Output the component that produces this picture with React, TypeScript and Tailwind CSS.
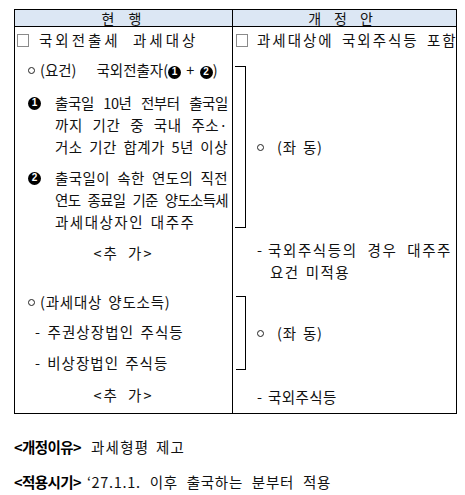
import React from "react";

function Num({ n }: { n: string }) {
  return (
    <span className="inline-flex h-[13px] w-[13px] shrink-0 items-center justify-center rounded-full bg-black align-middle font-['Liberation_Sans',sans-serif] text-[10px] font-bold leading-none tracking-normal text-white">
      {n}
    </span>
  );
}

function Box() {
  return <span className="h-[13px] w-[12px] shrink-0 border border-[#8a8a8a]" />;
}

function Dot() {
  return <span className="h-[7px] w-[7px] shrink-0 rounded-full border border-[#222]" />;
}

// justified line inside a numbered paragraph
function JLine({ children, cls = "" }: { children: React.ReactNode; cls?: string }) {
  return (
    <div className={"h-[22px] w-[173px] whitespace-nowrap text-justify leading-[22px] [text-align-last:justify] " + cls}>
      {children}
    </div>
  );
}

export default function App() {
  return (
    <div className="h-[495px] w-[465px] bg-white pl-[14px] pt-[9px] font-['Noto_Sans_CJK_KR','Noto_Sans',sans-serif] text-[14.5px] text-[#111] [word-spacing:2px]">
      <div className="w-[443px] border border-black">
        {/* header */}
        <div className="grid h-[17px] grid-cols-[218px_1fr] border-b border-black bg-[#dce7f4] text-[14px] leading-none">
          <div className="flex items-center justify-center gap-[14px] border-r border-black pr-[4px]">
            <span>현</span>
            <span>행</span>
          </div>
          <div className="flex items-center justify-center gap-[13px] pr-[8px]">
            <span>개</span>
            <span>정</span>
            <span>안</span>
          </div>
        </div>

        {/* body */}
        <div className="grid h-[386px] grid-cols-[218px_1fr]">
          {/* 현행 */}
          <div className="flex flex-col border-r border-black">
            <div className="mt-[2px] flex h-[22px] items-center pl-[2px]">
              <Box />
              <span className="ml-[10px] whitespace-nowrap tracking-[3px] [word-spacing:6px]">국외전출세 과세대상</span>
            </div>

            <div className="mt-[8px] flex h-[22px] items-center pl-[13px]">
              <Dot />
              <span className="ml-[5px] whitespace-nowrap">(요건)</span>
              <span className="ml-[20px] whitespace-nowrap">
                국외전출자(<Num n="1" /> + <Num n="2" />)
              </span>
            </div>

            <div className="mt-[11px] flex pl-[13px]">
              <div className="flex h-[22px] items-center">
                <Num n="1" />
              </div>
              <div className="ml-[14px] flex flex-col">
                <JLine cls="tracking-[-0.4px]">출국일 10년 전부터 출국일</JLine>
                <JLine cls="tracking-[0.6px]">까지 기간 중 국내 주소·</JLine>
                <JLine cls="tracking-[0.5px]">거소 기간 합계가 5년 이상</JLine>
              </div>
            </div>

            <div className="mt-[9px] flex pl-[13px]">
              <div className="flex h-[22px] items-center">
                <Num n="2" />
              </div>
              <div className="ml-[14px] flex flex-col">
                <JLine cls="tracking-[0.4px]">출국일이 속한 연도의 직전</JLine>
                <JLine cls="tracking-[-0.7px]">연도 종료일 기준 양도소득세</JLine>
                <div className="h-[22px] whitespace-nowrap leading-[22px] tracking-[1.5px]">과세대상자인 대주주</div>
              </div>
            </div>

            <div className="mt-[9px] h-[22px] text-center leading-[22px] tracking-[2px] [word-spacing:4px]">&lt;추 가&gt;</div>

            <div className="mt-[27px] flex h-[22px] items-center pl-[13px]">
              <Dot />
              <span className="ml-[5px] whitespace-nowrap tracking-[0.8px]">(과세대상 양도소득)</span>
            </div>
            <div className="mt-[8px] h-[22px] whitespace-nowrap pl-[20px] leading-[22px] tracking-[1.1px]">- 주권상장법인 주식등</div>
            <div className="mt-[9px] h-[22px] whitespace-nowrap pl-[20px] leading-[22px] tracking-[1px]">- 비상장법인 주식등</div>
            <div className="mt-[10px] h-[22px] text-center leading-[22px] tracking-[2px] [word-spacing:4px]">&lt;추 가&gt;</div>
          </div>

          {/* 개정안 */}
          <div className="flex flex-col">
            <div className="mt-[2px] flex h-[22px] items-center pl-[3px]">
              <Box />
              <span className="ml-[9px] whitespace-nowrap tracking-[2px] [word-spacing:3px]">과세대상에 국외주식등 포함</span>
            </div>

            <div className="mt-[15px] flex h-[162px] items-center pl-[2px]">
              <div className="h-full w-[11px] border-y border-r border-black" />
              <div className="ml-[11px] flex items-center">
                <Dot />
                <span className="ml-[13px] whitespace-nowrap tracking-[0.8px]">(좌 동)</span>
              </div>
            </div>

            <div className="mt-[11px] flex pl-[24px]">
              <div className="h-[22px] leading-[22px]">-</div>
              <div className="ml-[6px] flex flex-col">
                <div className="h-[22px] w-[184px] whitespace-nowrap text-justify leading-[22px] tracking-[1.6px] [text-align-last:justify]">
                  국외주식등의 경우 대주주
                </div>
                <div className="h-[22px] whitespace-nowrap pl-[2px] leading-[22px] tracking-[1.3px]">요건 미적용</div>
              </div>
            </div>

            <div className="mt-[13px] flex h-[74px] items-center pl-[3px]">
              <div className="h-full w-[10px] border-y border-r border-black" />
              <div className="ml-[11px] flex items-center">
                <Dot />
                <span className="ml-[13px] whitespace-nowrap tracking-[0.8px]">(좌 동)</span>
              </div>
            </div>

            <div className="mt-[16px] flex h-[22px] items-center pl-[24px]">
              <span>-</span>
              <span className="ml-[6px] tracking-[0.4px]">국외주식등</span>
            </div>
          </div>
        </div>
      </div>

      <div className="mt-[22px] flex h-[22px] items-center whitespace-nowrap">
        <span className="text-[14.5px] font-bold tracking-[-0.6px] text-black">&lt;개정이유&gt;</span>
        <span className="ml-[10px] tracking-[1.3px]">과세형평 제고</span>
      </div>
      <div className="mt-[13px] flex h-[22px] items-center whitespace-nowrap">
        <span className="text-[14.5px] font-bold tracking-[-0.6px] text-black">&lt;적용시기&gt;</span>
        <span className="ml-[6px] tracking-[0.7px] [word-spacing:5px]">‘27.1.1. 이후 출국하는 분부터 적용</span>
      </div>
    </div>
  );
}
